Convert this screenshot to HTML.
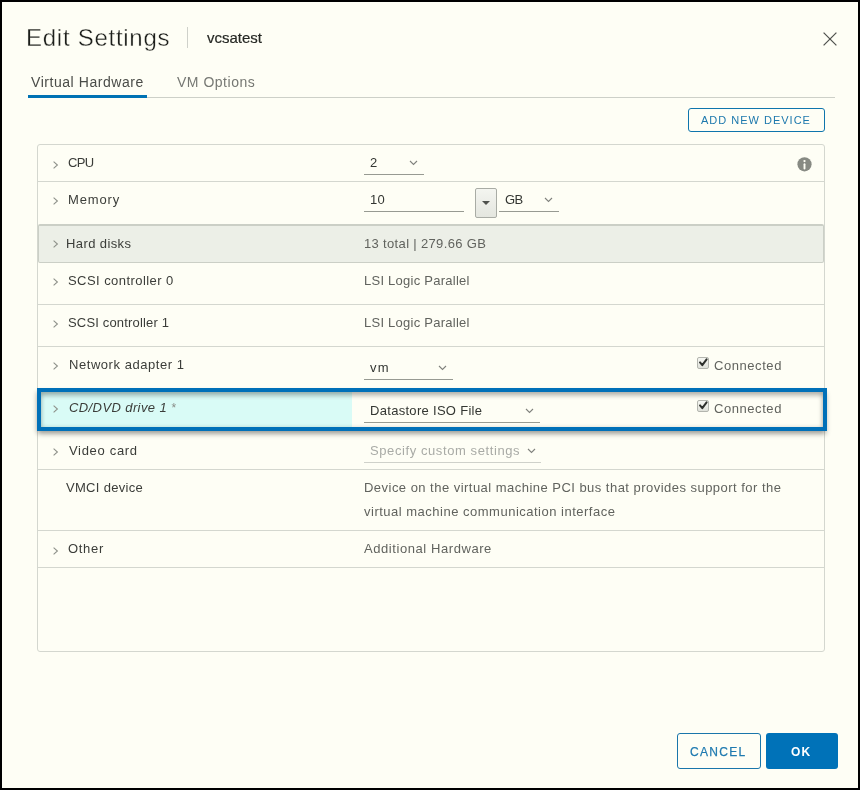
<!DOCTYPE html>
<html><head><meta charset="utf-8"><style>
html,body{margin:0;padding:0;}
body{width:860px;height:790px;position:relative;overflow:hidden;background:#fefef5;font-family:"Liberation Sans",sans-serif;}
.frame{position:absolute;left:0;top:0;width:860px;height:790px;box-sizing:border-box;border:2px solid #000;pointer-events:none;z-index:10}
.t{position:absolute;white-space:nowrap;will-change:transform;}
.r{position:absolute;}
</style></head><body>
<div class="t" style="left:26px;top:25.68px;font-size:24px;line-height:24px;color:#1c1e1a;letter-spacing:0.73px;font-weight:normal;font-style:normal;-webkit-text-stroke:0.35px #fefef5">Edit Settings</div>
<div class="r" style="left:187px;top:27px;width:1px;height:21px;background:#cfd1ca"></div>
<div class="t" style="left:207px;top:30.30px;font-size:15px;line-height:15px;color:#262824;letter-spacing:0px;font-weight:normal;font-style:normal;-webkit-text-stroke:0.2px #262824">vcsatest</div>
<svg class="r" style="left:823px;top:32px" width="14" height="14" viewBox="0 0 14 14"><path d="M0.6 0.6L13.4 13.4M13.4 0.6L0.6 13.4" stroke="#50524e" stroke-width="1.25" fill="none"/></svg>
<div class="t" style="left:31px;top:75.15px;font-size:14px;line-height:14px;color:#4a4c48;letter-spacing:0.55px;font-weight:normal;font-style:normal;">Virtual Hardware</div>
<div class="t" style="left:177px;top:75.15px;font-size:14px;line-height:14px;color:#767873;letter-spacing:0.51px;font-weight:normal;font-style:normal;">VM Options</div>
<div class="r" style="left:28px;top:97px;width:807px;height:1px;background:#cdd0c8"></div>
<div class="r" style="left:28px;top:95px;width:119px;height:3px;background:#0072b4"></div>
<div class="r" style="left:688px;top:108px;width:137px;height:24px;box-sizing:border-box;border:1px solid #0f75ad;border-radius:3px"></div>
<div class="t" style="left:701px;top:114.69px;font-size:11px;line-height:11px;color:#1c78ad;letter-spacing:1.0px;font-weight:normal;font-style:normal;">ADD NEW DEVICE</div>
<div class="r" style="left:37px;top:144px;width:788px;height:508px;box-sizing:border-box;border:1px solid #d4d7cf;border-radius:3px"></div>
<div class="r" style="left:38px;top:181px;width:786px;height:1px;background:#d4d7cf"></div>
<div class="r" style="left:38px;top:304px;width:786px;height:1px;background:#d4d7cf"></div>
<div class="r" style="left:38px;top:346px;width:786px;height:1px;background:#d4d7cf"></div>
<div class="r" style="left:38px;top:388px;width:786px;height:1px;background:#d4d7cf"></div>
<div class="r" style="left:38px;top:430px;width:786px;height:1px;background:#d4d7cf"></div>
<div class="r" style="left:38px;top:469px;width:786px;height:1px;background:#d4d7cf"></div>
<div class="r" style="left:38px;top:530px;width:786px;height:1px;background:#d4d7cf"></div>
<div class="r" style="left:38px;top:567px;width:786px;height:1px;background:#d4d7cf"></div>
<div class="r" style="left:38px;top:224px;width:786px;height:39px;box-sizing:border-box;background:#ecefe7;border:1px solid #cbcfc6;border-top:2px solid #cbcfc6;border-radius:2px"></div>
<div class="t" style="left:68px;top:156.00px;font-size:13px;line-height:13px;color:#3b3d39;letter-spacing:-0.6px;font-weight:normal;font-style:normal;">CPU</div>
<svg class="r" style="left:52px;top:160px" width="7" height="10" viewBox="0 0 7 10"><path d="M1.6 1.6L5.4 5L1.6 8.4" stroke="#8e918a" stroke-width="1.1" fill="none"/></svg>
<div class="t" style="left:68px;top:193.00px;font-size:13px;line-height:13px;color:#3b3d39;letter-spacing:0.85px;font-weight:normal;font-style:normal;">Memory</div>
<svg class="r" style="left:52px;top:196px" width="7" height="10" viewBox="0 0 7 10"><path d="M1.6 1.6L5.4 5L1.6 8.4" stroke="#8e918a" stroke-width="1.1" fill="none"/></svg>
<div class="t" style="left:66px;top:237.00px;font-size:13px;line-height:13px;color:#3b3d39;letter-spacing:0.4px;font-weight:normal;font-style:normal;">Hard disks</div>
<svg class="r" style="left:52px;top:239px" width="7" height="10" viewBox="0 0 7 10"><path d="M1.6 1.6L5.4 5L1.6 8.4" stroke="#8e918a" stroke-width="1.1" fill="none"/></svg>
<div class="t" style="left:68px;top:274.00px;font-size:13px;line-height:13px;color:#3b3d39;letter-spacing:0.44px;font-weight:normal;font-style:normal;">SCSI controller 0</div>
<svg class="r" style="left:52px;top:277px" width="7" height="10" viewBox="0 0 7 10"><path d="M1.6 1.6L5.4 5L1.6 8.4" stroke="#8e918a" stroke-width="1.1" fill="none"/></svg>
<div class="t" style="left:68px;top:316.00px;font-size:13px;line-height:13px;color:#3b3d39;letter-spacing:0.17px;font-weight:normal;font-style:normal;">SCSI controller 1</div>
<svg class="r" style="left:52px;top:319px" width="7" height="10" viewBox="0 0 7 10"><path d="M1.6 1.6L5.4 5L1.6 8.4" stroke="#8e918a" stroke-width="1.1" fill="none"/></svg>
<div class="t" style="left:69px;top:358.00px;font-size:13px;line-height:13px;color:#3b3d39;letter-spacing:0.55px;font-weight:normal;font-style:normal;">Network adapter 1</div>
<svg class="r" style="left:52px;top:361px" width="7" height="10" viewBox="0 0 7 10"><path d="M1.6 1.6L5.4 5L1.6 8.4" stroke="#8e918a" stroke-width="1.1" fill="none"/></svg>
<div class="t" style="left:69px;top:444.00px;font-size:13px;line-height:13px;color:#3b3d39;letter-spacing:0.68px;font-weight:normal;font-style:normal;">Video card</div>
<svg class="r" style="left:52px;top:447px" width="7" height="10" viewBox="0 0 7 10"><path d="M1.6 1.6L5.4 5L1.6 8.4" stroke="#8e918a" stroke-width="1.1" fill="none"/></svg>
<div class="t" style="left:68px;top:542.00px;font-size:13px;line-height:13px;color:#3b3d39;letter-spacing:0.7px;font-weight:normal;font-style:normal;">Other</div>
<svg class="r" style="left:52px;top:546px" width="7" height="10" viewBox="0 0 7 10"><path d="M1.6 1.6L5.4 5L1.6 8.4" stroke="#8e918a" stroke-width="1.1" fill="none"/></svg>
<div class="t" style="left:66px;top:481.00px;font-size:13px;line-height:13px;color:#3b3d39;letter-spacing:0.31px;font-weight:normal;font-style:normal;">VMCI device</div>
<div class="r" style="left:37px;top:388px;width:790px;height:43px;box-sizing:border-box;border:4px solid #0070b8;background:#fefef5;box-shadow:0 4px 5px -1px rgba(0,0,0,.32), -2px 2px 5px -1px rgba(0,0,0,.12)"></div>
<div class="r" style="left:41px;top:392px;width:311px;height:35px;background:#d9fbf6"></div>
<div class="r" style="left:37px;top:388px;width:790px;height:43px;box-sizing:border-box;border:4px solid #0070b8;box-shadow: inset 0 4px 4px rgba(0,0,0,.24), inset -2px 0 4px rgba(0,0,0,.1), inset 2px 0 4px rgba(0,0,0,.06)"></div>
<svg class="r" style="left:52px;top:404px" width="7" height="10" viewBox="0 0 7 10"><path d="M1.6 1.6L5.4 5L1.6 8.4" stroke="#8e918a" stroke-width="1.1" fill="none"/></svg>
<div class="t" style="left:69px;top:401.00px;font-size:13px;line-height:13px;color:#3b3d39;letter-spacing:0.4px;font-weight:normal;font-style:italic;">CD/DVD drive 1 <span style="color:#8a8c87;font-size:12px">*</span></div>
<div class="t" style="left:370px;top:156.00px;font-size:13px;line-height:13px;color:#333632;letter-spacing:0.3px;font-weight:normal;font-style:normal;">2</div>
<div class="r" style="left:364px;top:174px;width:60px;height:1px;background:#979a92"></div>
<svg class="r" style="left:409px;top:160px" width="9" height="6" viewBox="0 0 9 6"><path d="M1 1L4.5 4.5L8 1" stroke="#80827d" stroke-width="1.1" fill="none"/></svg>
<div class="t" style="left:370px;top:193.00px;font-size:13px;line-height:13px;color:#333632;letter-spacing:0.3px;font-weight:normal;font-style:normal;">10</div>
<div class="r" style="left:364px;top:211px;width:100px;height:1px;background:#979a92"></div>
<svg class="r" style="left:0px;top:-20px" width="9" height="6" viewBox="0 0 9 6"><path d="M1 1L4.5 4.5L8 1" stroke="#80827d" stroke-width="1.1" fill="none"/></svg>
<div class="r" style="left:475px;top:188px;width:22px;height:30px;box-sizing:border-box;border:1px solid #a9aca5;border-radius:2px;background:linear-gradient(#f4f5f0,#e4e6df)"></div>
<svg class="r" style="left:482px;top:201px" width="8" height="5" viewBox="0 0 8 5"><path d="M0 0L8 0L4 4Z" fill="#4f514d"/></svg>
<div class="t" style="left:505px;top:193.00px;font-size:13px;line-height:13px;color:#333632;letter-spacing:-0.7px;font-weight:normal;font-style:normal;">GB</div>
<div class="r" style="left:499px;top:211px;width:60px;height:1px;background:#979a92"></div>
<svg class="r" style="left:544px;top:197px" width="9" height="6" viewBox="0 0 9 6"><path d="M1 1L4.5 4.5L8 1" stroke="#80827d" stroke-width="1.1" fill="none"/></svg>
<div class="t" style="left:364px;top:237.00px;font-size:13px;line-height:13px;color:#61635e;letter-spacing:0.34px;font-weight:normal;font-style:normal;">13 total | 279.66 GB</div>
<div class="t" style="left:364px;top:274.00px;font-size:13px;line-height:13px;color:#61635e;letter-spacing:0.25px;font-weight:normal;font-style:normal;">LSI Logic Parallel</div>
<div class="t" style="left:364px;top:316.00px;font-size:13px;line-height:13px;color:#61635e;letter-spacing:0.25px;font-weight:normal;font-style:normal;">LSI Logic Parallel</div>
<div class="t" style="left:370px;top:361.00px;font-size:13px;line-height:13px;color:#333632;letter-spacing:1.2px;font-weight:normal;font-style:normal;">vm</div>
<div class="r" style="left:364px;top:379px;width:89px;height:1px;background:#979a92"></div>
<svg class="r" style="left:438px;top:365px" width="9" height="6" viewBox="0 0 9 6"><path d="M1 1L4.5 4.5L8 1" stroke="#80827d" stroke-width="1.1" fill="none"/></svg>
<div class="t" style="left:370px;top:404.00px;font-size:13px;line-height:13px;color:#333632;letter-spacing:0.3px;font-weight:normal;font-style:normal;">Datastore ISO File</div>
<div class="r" style="left:364px;top:422px;width:176px;height:1px;background:#979a92"></div>
<svg class="r" style="left:525px;top:408px" width="9" height="6" viewBox="0 0 9 6"><path d="M1 1L4.5 4.5L8 1" stroke="#80827d" stroke-width="1.1" fill="none"/></svg>
<div class="t" style="left:370px;top:444.00px;font-size:13px;line-height:13px;color:#a9aba6;letter-spacing:0.59px;font-weight:normal;font-style:normal;">Specify custom settings</div>
<div class="r" style="left:364px;top:462px;width:177px;height:1px;background:#cfd1ca"></div>
<svg class="r" style="left:527px;top:448px" width="9" height="6" viewBox="0 0 9 6"><path d="M1 1L4.5 4.5L8 1" stroke="#80827d" stroke-width="1.1" fill="none"/></svg>
<div class="t" style="left:364px;top:481.00px;font-size:13px;line-height:13px;color:#61635e;letter-spacing:0.47px;font-weight:normal;font-style:normal;">Device on the virtual machine PCI bus that provides support for the</div>
<div class="t" style="left:364px;top:505.00px;font-size:13px;line-height:13px;color:#61635e;letter-spacing:0.5px;font-weight:normal;font-style:normal;">virtual machine communication interface</div>
<div class="t" style="left:364px;top:542.00px;font-size:13px;line-height:13px;color:#61635e;letter-spacing:0.57px;font-weight:normal;font-style:normal;">Additional Hardware</div>
<svg class="r" style="left:797px;top:157px" width="15" height="15" viewBox="0 0 15 15"><circle cx="7.5" cy="7.3" r="7.1" fill="#878a83"/><circle cx="7.5" cy="4.1" r="1.15" fill="#fefef5"/><path d="M7.5 7.2L7.5 11.6" stroke="#fefef5" stroke-width="1.9" stroke-linecap="round"/></svg>
<div class="r" style="left:697px;top:357px;width:12px;height:12px;box-sizing:border-box;border:1px solid #b3b5ae;border-radius:2px;background:linear-gradient(#f6f7f2,#dfe1da)"></div>
<svg class="r" style="left:697px;top:357px" width="12" height="12" viewBox="0 0 12 12"><path d="M3 5.4L5.3 8.2L9.6 2.4" stroke="#2e302c" stroke-width="2" fill="none" stroke-linecap="round" stroke-linejoin="round"/></svg>
<div class="t" style="left:714px;top:359.00px;font-size:13px;line-height:13px;color:#61635e;letter-spacing:0.56px;font-weight:normal;font-style:normal;">Connected</div>
<div class="r" style="left:697px;top:400px;width:12px;height:12px;box-sizing:border-box;border:1px solid #b3b5ae;border-radius:2px;background:linear-gradient(#f6f7f2,#dfe1da)"></div>
<svg class="r" style="left:697px;top:400px" width="12" height="12" viewBox="0 0 12 12"><path d="M3 5.4L5.3 8.2L9.6 2.4" stroke="#2e302c" stroke-width="2" fill="none" stroke-linecap="round" stroke-linejoin="round"/></svg>
<div class="t" style="left:714px;top:402.00px;font-size:13px;line-height:13px;color:#61635e;letter-spacing:0.56px;font-weight:normal;font-style:normal;">Connected</div>
<div class="r" style="left:677px;top:733px;width:84px;height:36px;box-sizing:border-box;border:1px solid #1a76ab;border-radius:3px"></div>
<div class="t" style="left:690px;top:745.84px;font-size:12px;line-height:12px;color:#1f7ab0;letter-spacing:1.3px;font-weight:normal;font-style:normal;-webkit-text-stroke:0.25px #1f7ab0">CANCEL</div>
<div class="r" style="left:766px;top:733px;width:72px;height:36px;background:#0072b8;border-radius:3px"></div>
<div class="t" style="left:791px;top:745.84px;font-size:12px;line-height:12px;color:#ffffff;letter-spacing:1.2px;font-weight:bold;font-style:normal;">OK</div>
<div class="frame"></div>
</body></html>
